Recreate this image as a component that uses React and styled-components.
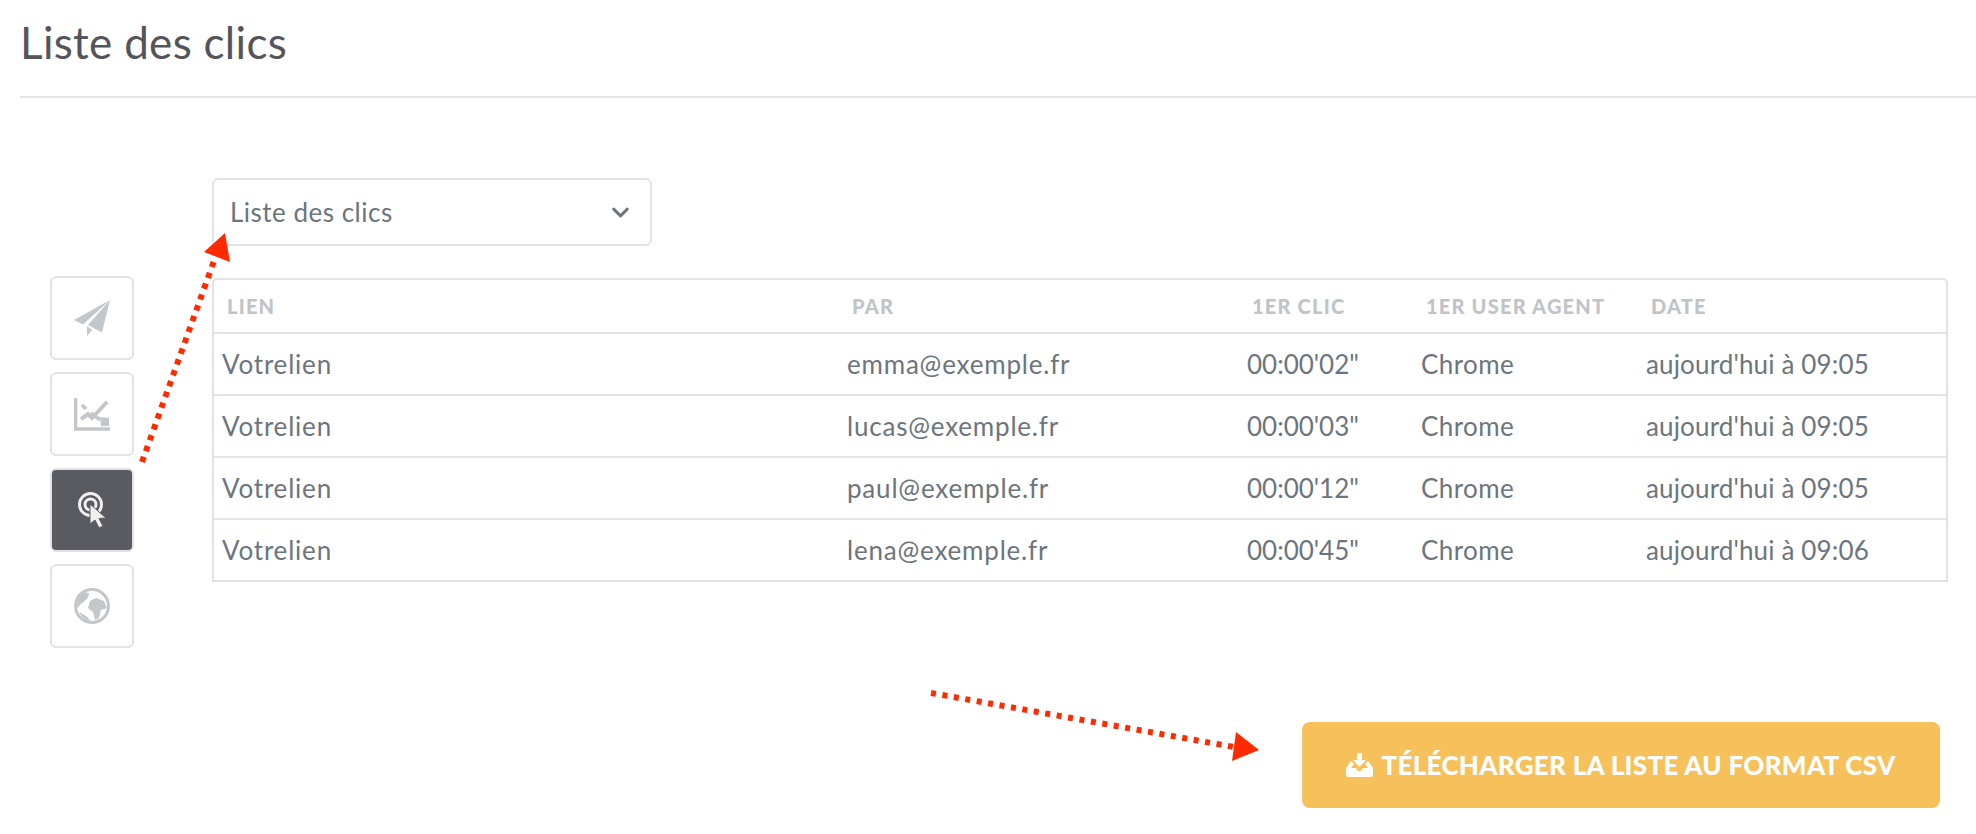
import styled, { createGlobalStyle } from "styled-components";
import { ChevronDown } from "lucide-react";

const GlobalStyle = createGlobalStyle`
  html, body {
    margin: 0;
    padding: 0;
    background: #ffffff;
    font-family: "Lato", "Open Sans", sans-serif;
  }
  * { box-sizing: border-box; }
`;

const Page = styled.div`
  position: relative;
  width: 1976px;
  height: 834px;
  overflow: hidden;
  padding-left: 20px;
`;

const Title = styled.h1`
  margin: 0;
  height: 98px;
  padding-top: 17px;
  border-bottom: 2px solid #e2e3e8;
  font-size: 44px;
  line-height: 50px;
  font-weight: 400;
  letter-spacing: 0.3px;
  color: #54555a;
`;

const Main = styled.div`
  display: flex;
  padding: 80px 29px 0 30px;
`;

const SideNav = styled.nav`
  display: flex;
  flex-direction: column;
  gap: 12px;
  width: 84px;
  margin-top: 98px;
  margin-right: 78px;
`;

const SideButton = styled.button`
  display: flex;
  align-items: center;
  justify-content: center;
  width: 84px;
  height: 84px;
  padding: 0;
  border: 2px solid #e2e3e8;
  border-radius: 6px;
  background: ${(p) => (p.$active ? "#5a5b61" : "#ffffff")};
  color: ${(p) => (p.$active ? "#f0f0f0" : "#c3c7ca")};
`;

const Content = styled.div`
  flex: 1;
  display: flex;
  flex-direction: column;
`;

const Select = styled.div`
  display: flex;
  align-items: center;
  justify-content: space-between;
  width: 440px;
  height: 68px;
  padding: 0 16px 0 16px;
  border: 2px solid #e2e3e8;
  border-radius: 6px;
  font-size: 26px;
  letter-spacing: 0.5px;
  color: #6c757d;
`;

const Table = styled.table`
  width: 1734px;
  margin-top: 32px;
  border: 2px solid #e2e3e8;
  border-radius: 5px 5px 0 0;
  border-spacing: 0;
  table-layout: fixed;
`;

const HeadCell = styled.th`
  height: 54px;
  padding: 0 0 0 13px;
  border-bottom: 2px solid #e2e3e8;
  font-size: 20px;
  font-weight: 900;
  letter-spacing: 1.2px;
  text-align: left;
  text-transform: uppercase;
  color: #c0c4c7;
`;

const Cell = styled.td`
  height: ${(p) => (p.$last ? "60px" : "62px")};
  padding: 0 0 0 8px;
  border-bottom: ${(p) => (p.$last ? "none" : "2px solid #e2e3e8")};
  font-size: 26px;
  letter-spacing: ${(p) => p.$tracking}px;
  color: #6c757d;
`;

const Footer = styled.div`
  display: flex;
  justify-content: flex-end;
  margin-top: 140px;
  padding-right: 8px;
`;

const DownloadButton = styled.button`
  display: flex;
  align-items: center;
  justify-content: center;
  gap: 8px;
  width: 638px;
  height: 86px;
  border: none;
  border-radius: 8px;
  background: #f6c15b;
  color: #ffffff;
  font-family: inherit;
  font-size: 26px;
  font-weight: 900;
  letter-spacing: 0.3px;
`;

const ArrowLayer = styled.svg`
  position: absolute;
  top: 0;
  left: 0;
  pointer-events: none;
`;

const columns = [
  { label: "Lien", width: 625, tracking: 0.8 },
  { label: "Par", width: 400, tracking: 0.8 },
  { label: "1er clic", width: 174, tracking: 0 },
  { label: "1er user agent", width: 225, tracking: 0.4 },
  { label: "Date", width: 308, tracking: 0.15 },
];

const rows = [
  ["Votrelien", "emma@exemple.fr", "00:00'02\"", "Chrome", "aujourd'hui à 09:05"],
  ["Votrelien", "lucas@exemple.fr", "00:00'03\"", "Chrome", "aujourd'hui à 09:05"],
  ["Votrelien", "paul@exemple.fr", "00:00'12\"", "Chrome", "aujourd'hui à 09:05"],
  ["Votrelien", "lena@exemple.fr", "00:00'45\"", "Chrome", "aujourd'hui à 09:06"],
];

const PlaneIcon = () => (
  <svg width="36" height="36" viewBox="0 0 36 36" fill="currentColor">
    <path d="M36 0 0 20l9 4.500z" />
    <path d="M36 0 14 25l14 7.500z" />
    <path d="M13 26v10l5-6z" />
  </svg>
);

const ChartIcon = () => (
  <svg width="36" height="33" viewBox="0 0 36 33" fill="none" stroke="currentColor">
    <path d="M1.500 0v31H36" strokeWidth="3.500" />
    <path d="M7 21l7-5 4 4L33 4" strokeWidth="4" />
    <path d="M8 7l4 4M17 15l9 7" strokeWidth="3.500" />
    <path d="M26 19l9 1v8h-8z" fill="currentColor" stroke="none" />
  </svg>
);

const ClickIcon = () => (
  <svg width="28" height="36" viewBox="0 0 28 36" fill="none" stroke="currentColor">
    <circle cx="12.500" cy="12.500" r="11" strokeWidth="3" />
    <circle cx="12.500" cy="12.500" r="5.500" strokeWidth="3" />
    <path
      d="M12 12 28 26l-7 .5 4 7.500-4 2-4-8-5 4z"
      fill="currentColor"
      stroke="#5a5b61"
      strokeWidth="1"
    />
  </svg>
);

const GlobeIcon = () => (
  <svg width="36" height="36" viewBox="0 0 36 36" fill="currentColor">
    <circle cx="18" cy="18" r="16.500" fill="none" stroke="currentColor" strokeWidth="3" />
    <path d="M9 4C4 9 2 14 3 20l4-4c4-3 8-6 8-11z" />
    <path d="M16 13l6-3 8 3 3 7-6 2-2 8-4 2-2-8-5-4z" />
    <path d="M5 24c3 6 8 9 12 9l-5-5z" />
  </svg>
);

const DownloadIcon = () => (
  <svg width="27" height="24" viewBox="0 0 27 24" fill="currentColor">
    <path d="M11 0h5v7h4l-6.500 7L7 7h4z" />
    <path d="M5 8 0 15v7a2 2 0 0 0 2 2h23a2 2 0 0 0 2-2v-7l-5-7-3 3 3 4h-5l-2 3h-3l-2-3H5l3-4z" />
  </svg>
);

const Arrows = () => (
  <ArrowLayer width="1976" height="834" viewBox="0 0 1976 834">
    <line x1="142" y1="462" x2="215" y2="258" stroke="#ff2a00" strokeWidth="6" strokeDasharray="5.500 6" />
    <polygon points="225,233 204,252 230,262" fill="#ff2a00" />
    <line x1="931" y1="693" x2="1234" y2="747" stroke="#ff2a00" strokeWidth="6" strokeDasharray="5 6.600" />
    <polygon points="1236,732 1259,750 1232,761" fill="#ff2a00" />
  </ArrowLayer>
);

export default function App() {
  return (
    <Page>
      <GlobalStyle />
      <Title>Liste des clics</Title>
      <Main>
        <SideNav>
          <SideButton><PlaneIcon /></SideButton>
          <SideButton><ChartIcon /></SideButton>
          <SideButton $active><ClickIcon /></SideButton>
          <SideButton><GlobeIcon /></SideButton>
        </SideNav>
        <Content>
          <Select>
            Liste des clics
            <ChevronDown size={27} strokeWidth={2.6} />
          </Select>
          <Table>
            <colgroup>
              {columns.map((col) => (
                <col key={col.label} width={col.width} />
              ))}
            </colgroup>
            <thead>
              <tr>
                {columns.map((col) => (
                  <HeadCell key={col.label}>{col.label}</HeadCell>
                ))}
              </tr>
            </thead>
            <tbody>
              {rows.map((row, i) => (
                <tr key={row[1]}>
                  {row.map((value, j) => (
                    <Cell key={j} $last={i === rows.length - 1} $tracking={columns[j].tracking}>{value}</Cell>
                  ))}
                </tr>
              ))}
            </tbody>
          </Table>
          <Footer>
            <DownloadButton>
              <DownloadIcon />
              TÉLÉCHARGER LA LISTE AU FORMAT CSV
            </DownloadButton>
          </Footer>
        </Content>
      </Main>
      <Arrows />
    </Page>
  );
}
